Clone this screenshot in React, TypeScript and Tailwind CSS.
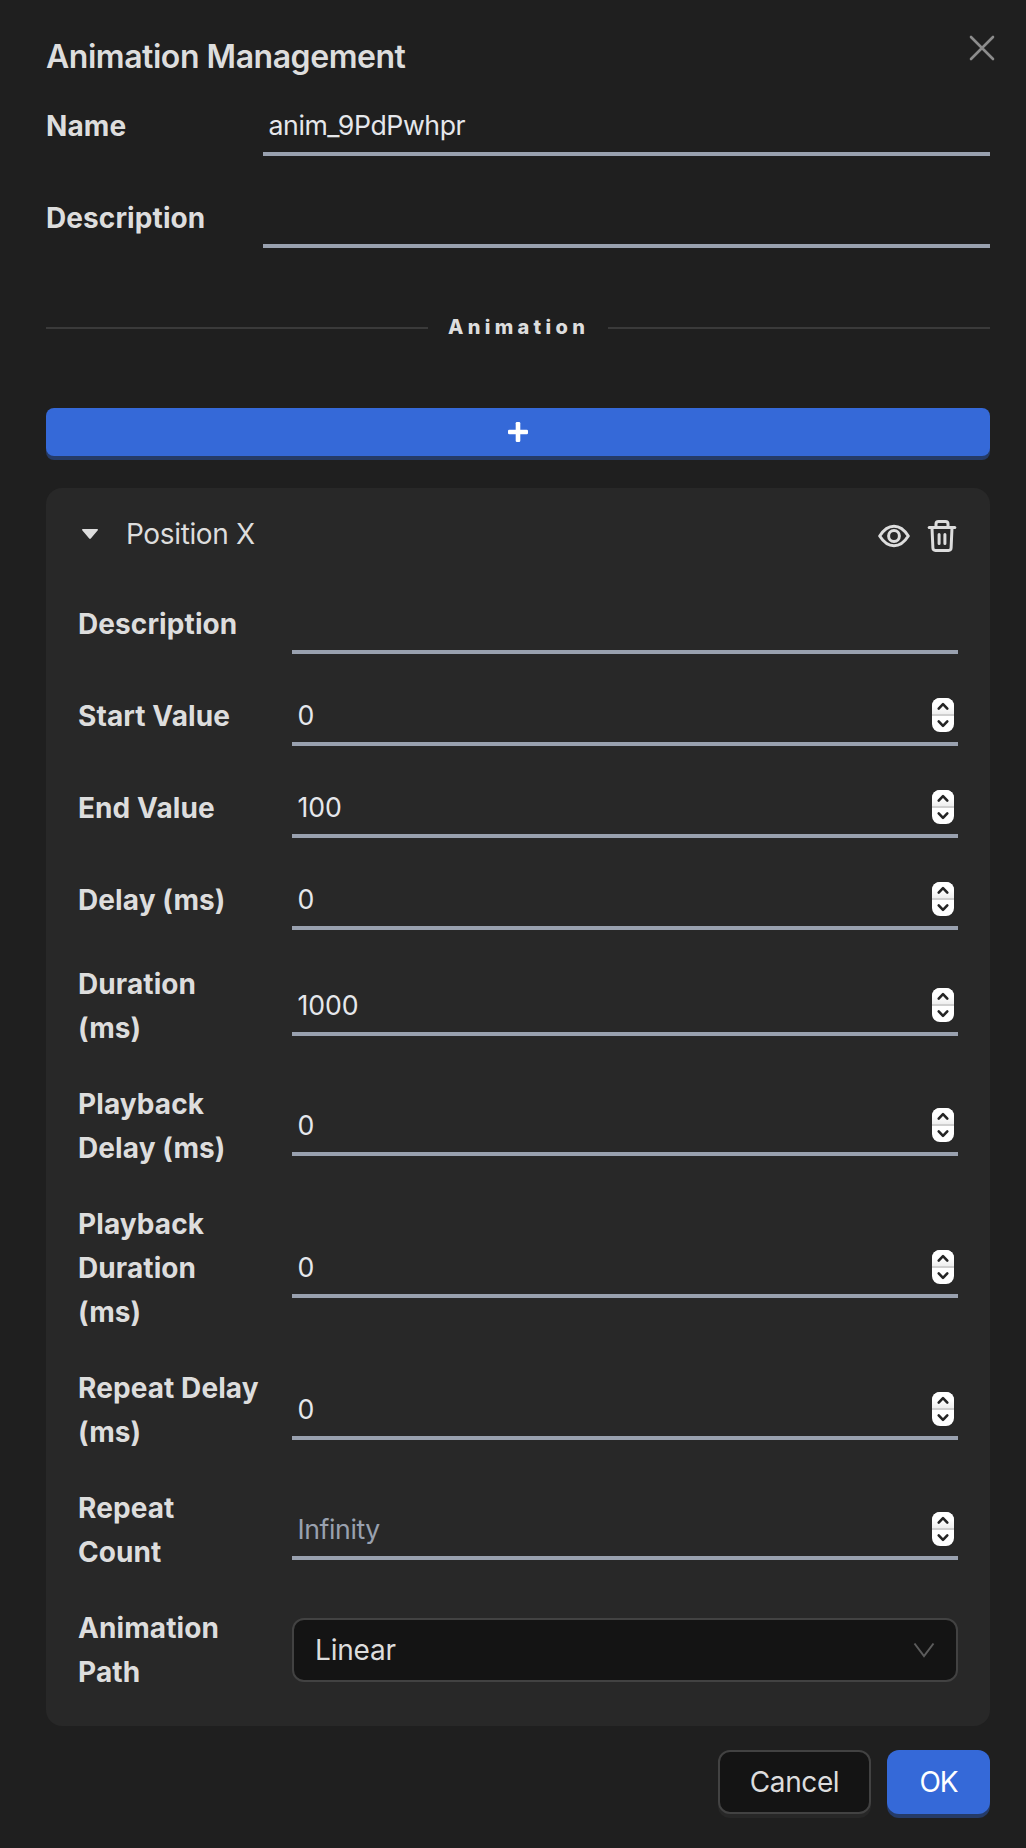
type FieldProps = {
  label: string;
  value?: string;
  placeholder?: string;
  numeric?: boolean;
};

function Stepper() {
  return (
    <div className="mt-[2px] mr-1 flex h-[34px] w-[22px] shrink-0 flex-col overflow-hidden rounded-[8px] bg-white">
      <div className="flex h-4 items-center justify-center bg-gradient-to-b from-white from-50% to-[#eeeeee]">
        <svg width="22" height="16" viewBox="0 0 22 16" fill="none" stroke="#242424" strokeWidth="2.6" strokeLinecap="round" strokeLinejoin="round">
          <path d="M6.7 10.6 11 6.1l4.3 4.5" />
        </svg>
      </div>
      <div className="h-[2px] bg-[#cfcfcf]" />
      <div className="flex h-4 items-center justify-center">
        <svg width="22" height="16" viewBox="0 0 22 16" fill="none" stroke="#242424" strokeWidth="2.6" strokeLinecap="round" strokeLinejoin="round">
          <path d="M6.7 5.4 11 9.9l4.3-4.5" />
        </svg>
      </div>
    </div>
  );
}

function Underlined({ value, placeholder, numeric }: Omit<FieldProps, "label">) {
  return (
    <div className="flex h-[60px] min-w-0 flex-1 items-center border-b-4 border-gray-400">
      <input
        type="text"
        defaultValue={value}
        placeholder={placeholder}
        className={`h-14 min-w-0 flex-1 bg-transparent pt-px pl-[5.5px] text-[26.67px] text-gray-200 outline-none placeholder:tracking-[-0.42px] placeholder:text-gray-400 ${numeric ? "tracking-[-0.1px]" : "tracking-[-0.42px]"}`}
      />
      {numeric && <Stepper />}
    </div>
  );
}

const labelText = "shrink-0 whitespace-pre-line text-[28px] leading-[44px] font-bold tracking-[0.09px]";

const cardFields: FieldProps[] = [
  { label: "Description" },
  { label: "Start Value", value: "0", numeric: true },
  { label: "End Value", value: "100", numeric: true },
  { label: "Delay (ms)", value: "0", numeric: true },
  { label: "Duration\n(ms)", value: "1000", numeric: true },
  { label: "Playback\nDelay (ms)", value: "0", numeric: true },
  { label: "Playback\nDuration\n(ms)", value: "0", numeric: true },
  { label: "Repeat Delay\n(ms)", value: "0", numeric: true },
  { label: "Repeat\nCount", placeholder: "Infinity", numeric: true },
];

function Header() {
  return (
    <div className="flex h-12 items-center justify-between">
      <h1 className="pt-[2px] text-[32px] leading-[48px] font-semibold tracking-[-0.46px]">Animation Management</h1>
      <button aria-label="Close" className="relative -top-2 -right-[6px]">
        <svg width="28" height="28" viewBox="0 0 28 28" fill="none" stroke="#8c8c8c" strokeWidth="2.6" strokeLinecap="round">
          <path d="M3 3 25 25M25 3 3 25" />
        </svg>
      </button>
    </div>
  );
}

function CardHeader() {
  return (
    <div className="flex h-11 items-center">
      <svg className="ml-1 shrink-0" width="16" height="12" viewBox="0 0 16 12" fill="#dddddd">
        <path d="M.8 1h14.4c.7 0 1 .7.6 1.200L8.800 10.600c-.4.5-1.200.5-1.600 0L.2 2.200C-.2 1.700.1 1 .8 1Z" />
      </svg>
      <span className="ml-7 flex-1 text-[28px] leading-[44px] tracking-[-0.36px]">Position X</span>
      <div className="mt-1 flex gap-4">
        <svg width="32" height="32" viewBox="0 0 32 32" fill="none" stroke="#dddddd" strokeWidth="3" strokeLinejoin="round">
          <path d="M1.700 16C5.500 10 10.400 6.200 16 6.200S26.500 10 30.300 16C26.500 22 21.600 25.800 16 25.800S5.500 22 1.700 16Z" />
          <circle cx="16" cy="16" r="5.400" />
        </svg>
        <svg width="32" height="32" viewBox="0 0 32 32" fill="none" stroke="#dddddd" strokeWidth="3" strokeLinecap="round" strokeLinejoin="round">
          <path d="M3.200 7.400h25.600" />
          <path d="M10 7V4c0-1.500 1-2.500 2.500-2.500h7C21 1.500 22 2.500 22 4v3" />
          <path d="M6 7.800 6.900 28c.1 1.500 1 2.400 2.500 2.400h13.200c1.500 0 2.400-.9 2.500-2.400L26 7.800" />
          <path d="M13.100 14.500v9M18.900 14.500v9" />
        </svg>
      </div>
    </div>
  );
}

export default function App() {
  return (
    <main
      className="flex h-[1848px] w-[1026px] flex-col bg-[#1f1f1f] pt-8 pr-9 pl-[46px] text-[#dddddd]"
      style={{ fontFamily: 'Inter, "Liberation Sans", sans-serif' }}
    >
      <Header />

      <div className="mt-4 flex flex-col gap-8">
        <label className="flex items-center">
          <span className={`${labelText} w-[217px]`}>Name</span>
          <Underlined value="anim_9PdPwhpr" />
        </label>
        <label className="flex items-center">
          <span className={`${labelText} w-[217px]`}>Description</span>
          <Underlined />
        </label>
      </div>

      <div className="mt-[62px] flex h-9 items-center">
        <div className="h-[2px] flex-1 bg-[#3a3a3a]" />
        <span className="-mt-[2px] w-[180px] pl-5 text-[20px] leading-9 font-extrabold tracking-[4.3px] whitespace-nowrap">Animation</span>
        <div className="h-[2px] flex-1 bg-[#3a3a3a]" />
      </div>

      <button aria-label="Add" className="mt-[62px] flex h-12 shrink-0 items-center justify-center rounded-lg bg-[#3569d8] pb-px shadow-[0_4px_0_#253b68]">
        <svg width="20" height="20" viewBox="0 0 20 20" fill="white">
          <rect x="0" y="7.700" width="20" height="4.600" rx="1.300" />
          <rect x="7.700" y="0" width="4.600" height="20" rx="1.300" />
        </svg>
      </button>

      <section className="mt-8 rounded-2xl bg-[#282828] px-8 pt-6 pb-8">
        <CardHeader />
        <div className="mt-[38px] flex flex-col gap-8">
          {cardFields.map((field) => (
            <label key={field.label} className="flex items-center">
              <span className={`${labelText} w-[214px]`}>{field.label}</span>
              <Underlined value={field.value} placeholder={field.placeholder} numeric={field.numeric} />
            </label>
          ))}
          <div className="flex items-center">
            <span className={`${labelText} w-[214px]`}>{"Animation\nPath"}</span>
            <div className="flex h-16 flex-1 items-center justify-between rounded-xl border-2 border-[#424242] bg-[#141414] pr-[21px] pl-[21px]">
              <span className="text-[28px] leading-[44px] tracking-[-0.2px]">Linear</span>
              <svg width="22" height="16" viewBox="0 0 22 16" fill="none" stroke="#5c5c5c" strokeWidth="2">
                <path d="M1.500 1.500 11 14 20.500 1.500" />
              </svg>
            </div>
          </div>
        </div>
      </section>

      <footer className="mt-6 flex justify-end gap-4 text-[28px]">
        <button className="h-16 w-[153px] rounded-xl border-2 border-[#424242] bg-[#141414] tracking-[-0.4px] shadow-[0_4px_0_#272727]">Cancel</button>
        <button className="h-16 w-[103px] rounded-xl bg-[#3569d8] tracking-[-1px] text-white shadow-[0_4px_0_#253b68]">OK</button>
      </footer>
    </main>
  );
}
